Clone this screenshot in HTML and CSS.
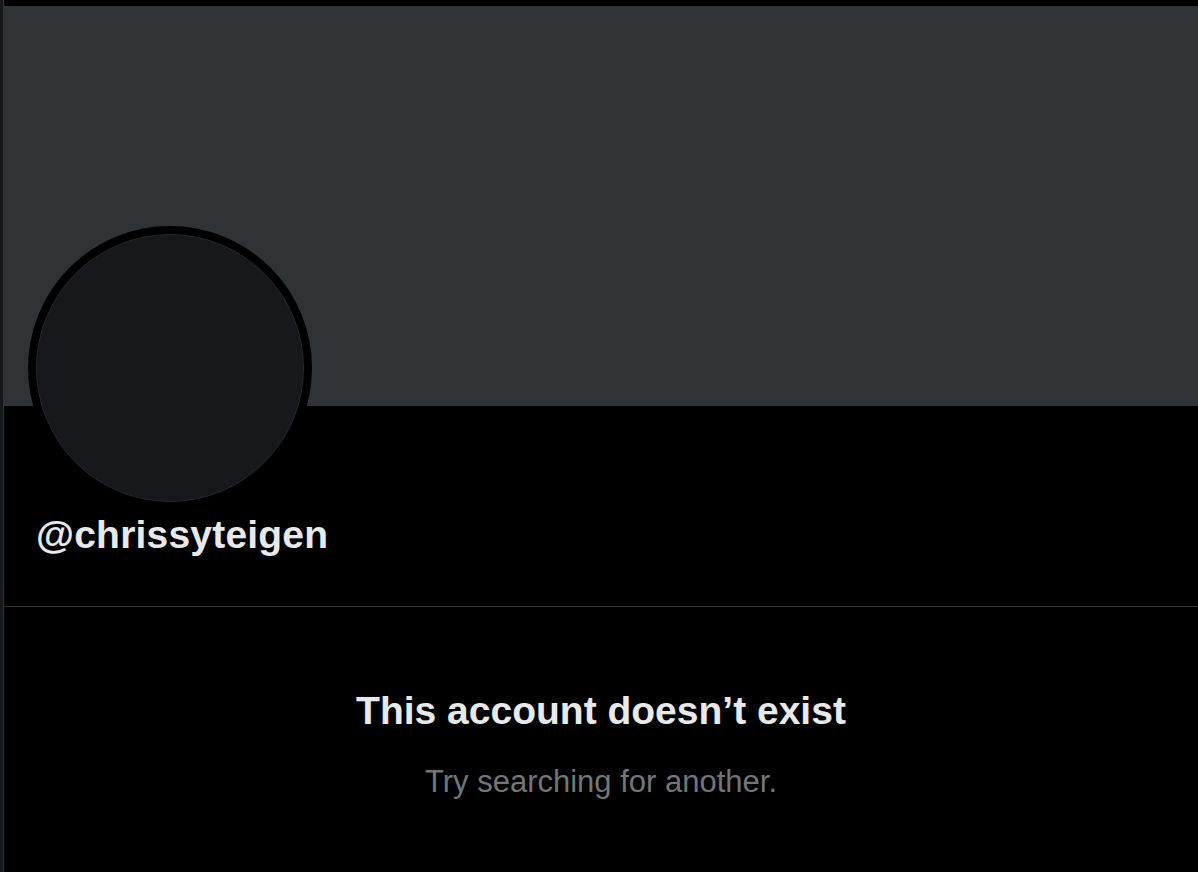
FILE: index.html
```html
<!DOCTYPE html>
<html lang="en">
<head>
<meta charset="utf-8">
<title>@chrissyteigen</title>
<link rel="stylesheet" href="styles.css">
</head>
<body>
<div class="page">
  <div class="strip"></div>
  <main class="main">
    <div class="banner"></div>
    <section class="profile">
      <div class="avatar"><div class="avatar-inner"></div></div>
      <div class="username">@chrissyteigen</div>
    </section>
    <section class="empty">
      <h1 class="empty-title">This account doesn’t exist</h1>
      <p class="empty-text">Try searching for another.</p>
    </section>
  </main>
</div>
</body>
</html>
```
FILE: styles.css
```css
html, body {
  margin: 0;
  padding: 0;
  background: #000;
  height: 100%;
}
body {
  font-family: "Liberation Sans", Arial, sans-serif;
  color: #e7e9ea;
  overflow: hidden;
}
.page {
  display: flex;
  min-height: 100%;
}
.strip {
  width: 3px;
  flex: none;
  background: #16181c;
}
.main {
  flex: 1;
  border-left: 1px solid #2f3336;
  padding-top: 6px;
  min-width: 0;
}
.banner {
  height: 400px;
  background: #2f3336;
}
.profile {
  padding: 0 24px 48px 24px;
  border-bottom: 1px solid #2f3336;
}
.avatar {
  width: 268px;
  height: 268px;
  border: 8px solid #000;
  border-radius: 50%;
  margin-top: -180px;
  background: #000;
  position: relative;
}
.avatar-inner {
  width: 100%;
  height: 100%;
  box-sizing: border-box;
  border-radius: 50%;
  background: #16181c;
  border: 1px solid #24272b;
}
.username {
  margin-top: 2px;
  padding-left: 8px;
  font-size: 39px;
  line-height: 46px;
  font-weight: 700;
  letter-spacing: 0.2px;
  color: #e7e9ea;
}
.empty {
  padding-top: 81px;
  text-align: center;
}
.empty-title {
  margin: 0;
  font-size: 39px;
  line-height: 46px;
  font-weight: 700;
  color: #e7e9ea;
}
.empty-text {
  margin: 29px 0 0 0;
  font-size: 31px;
  line-height: 37px;
  color: #71767b;
}
```
